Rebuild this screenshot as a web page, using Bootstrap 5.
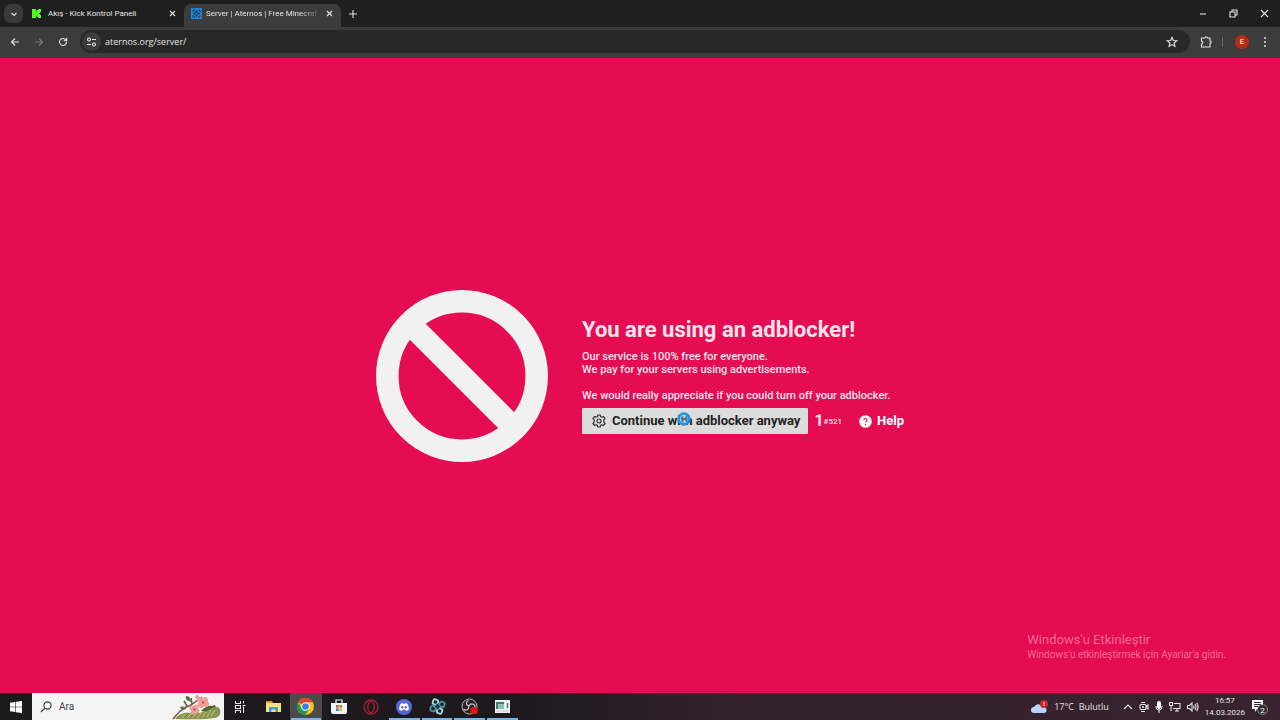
<!DOCTYPE html>
<html lang="tr">
<head>
<meta charset="utf-8">
<meta name="viewport" content="width=device-width, initial-scale=1">
<title>Server | Aternos | Free Minecraft Server</title>
<link href="https://cdn.jsdelivr.net/npm/bootstrap@5.3.0/dist/css/bootstrap.min.css" rel="stylesheet">
<style>
body{font-family:Roboto,"Open Sans",sans-serif;font-size:9px;line-height:12px;background:#e60c53;color:#e4e4e4}
button,input{font:inherit;color:inherit}
button{background:none;border:0;padding:0;display:flex;align-items:center;justify-content:center}
svg{display:block;flex-shrink:0}
.ln{fill:none;stroke:currentColor;stroke-width:1.1}
.strip{height:27px;background:#1f1f1f;padding-left:4px}
.tabmenu{width:19px;height:19px;border-radius:7px;background:#3a3a3a}
.tab{height:23px;gap:4px;padding:0 8px 4px 7px;align-self:flex-end;width:157px}
.tab.open{background:#3c3c3c;border-radius:7px 7px 0 0}
.tab a{color:inherit;text-decoration:none;white-space:nowrap;font-size:8px}
.tab.idle{padding-left:5px;gap:7px}
.fade-end{-webkit-mask-image:linear-gradient(90deg,#000 85%,rgba(0,0,0,.2));mask-image:linear-gradient(90deg,#000 85%,rgba(0,0,0,.2))}
.win{width:31px;height:27px}
.toolbar{height:31px;background:#3c3c3c;padding:0 3px 2px}
.tool{width:24px;height:24px}
.omni{height:23px;border-radius:12px;background:#282828;margin-left:5px;padding:0 12px 0 2px}
.omni input{background:none;border:0;outline:0;padding:0;font-family:"Open Sans",sans-serif;font-size:9px;min-width:0}
.site{width:19px;height:19px;border-radius:50%;background:#3c3c3c}
.rule{width:1px;height:10px;background:#666}
.avatar{width:14px;height:14px;border-radius:50%;background:#b92c14;font-size:8px;color:#fff}
.notice{gap:34px;color:#ffe3ec}
.notice h1{font-size:22px;line-height:26px;font-weight:700;margin:0 0 7px}
.notice p{font-size:11px;line-height:13px;margin:0 0 6px;font-weight:500}
.notice .go{height:26px;background:#dcdcdc;color:#222;font-size:13px;font-weight:700;border-radius:1px;padding:0 8px 0 10px;gap:6px}
.count{font-size:16px;font-weight:700;margin-left:6px}
.count small{font-size:8px;font-weight:500;vertical-align:2px}
.help{color:#fff;font-size:13px;font-weight:700;text-decoration:none;gap:5px;margin-left:17px}
.busy{left:95px;top:4px}
.mark-os{right:54px;bottom:32px;color:#f26a95}
.mark-os div{font-size:13px;line-height:17px}
.mark-os span{font-size:10px;line-height:13px}
.taskbar{height:27px;background:linear-gradient(90deg,#1b1b1c 0,#1e191d 40%,#33222c 58%,#38232e 100%)}
.start{width:32px;height:27px}
.find{width:192px;height:27px;background:#f5f5f5;color:#444;padding-left:8px;gap:7px}
.find input{border:0;background:none;outline:0;padding:0;min-width:0;font-size:10px}
.find input::placeholder{color:#444;opacity:1}
.apps{display:grid;grid-template-columns:repeat(9,1fr);width:295px}
.apps button{height:27px;border-bottom:2px solid transparent;padding-top:2px}
.apps .run{border-image:linear-gradient(90deg,transparent 8%,#76b5e8 8%,#76b5e8 92%,transparent 92%) 2}
.apps .now{background:#4b4b4b}
.tray{gap:6px;padding-right:12px}
.weather{font-family:"Open Sans",sans-serif;font-size:9px;margin-right:8px}
.clock{font-size:8px;line-height:12px;text-align:center}
</style>
</head>
<body class="vh-100 d-flex flex-column overflow-hidden">
<header>
  <div class="strip d-flex align-items-center">
    <button class="tabmenu" aria-label="Sekme ara"><svg class="ln" width="8" height="8" viewBox="0 0 8 8"><path d="M1.500 3 4 5.500 6.500 3"/></svg></button>
    <div class="tab idle d-flex align-items-center ms-1">
      <svg width="9" height="9" viewBox="0 0 9 9"><path fill="#53fc18" d="M0 0h4v2h1V1h1V0h3v3H8v1H7v1h1v1h1v3H6V8H5V7H4v2H0z"/></svg>
      <a href="#" class="flex-grow-1">Akış - Kick Kontrol Paneli</a>
      <button aria-label="Kapat"><svg class="ln" width="7" height="7" viewBox="0 0 7 7"><path d="m1 1 5 5M6 1 1 6"/></svg></button>
    </div>
    <div class="tab open d-flex align-items-center">
      <svg width="11" height="11" viewBox="0 0 11 11"><path fill="#2385cf" d="M0 0h11v11H0z"/><path d="M2 4V2h2m3 0h2v2m0 3v2H7M4 9H2V7m2-3h3v3H4zM2 5.500h2m3 0h2M5.500 2v2m0 3v2" fill="none" stroke="#10395e" stroke-width=".9"/></svg>
      <a href="#" class="fade-end">Server | Aternos | Free Minecraf</a>
      <button class="ms-auto" aria-label="Kapat"><svg class="ln" width="7" height="7" viewBox="0 0 7 7"><path d="m1 1 5 5M6 1 1 6"/></svg></button>
    </div>
    <button class="ms-2" aria-label="Yeni sekme"><svg class="ln" width="8" height="8" viewBox="0 0 8 8"><path d="M4 0v8M0 4h8"/></svg></button>
    <button class="win ms-auto" aria-label="Küçült"><svg class="ln" width="8" height="8" viewBox="0 0 8 8"><path d="M1 4h6"/></svg></button>
    <button class="win" aria-label="Önceki boyut"><svg class="ln" width="9" height="9" viewBox="0 0 9 9"><path d="M1 3h5v5H1zM3 3V1h5v5H6"/></svg></button>
    <button class="win" aria-label="Pencereyi kapat"><svg class="ln" width="9" height="9" viewBox="0 0 9 9"><path d="m1 1 7 7M8 1 1 8"/></svg></button>
  </div>
  <div class="toolbar d-flex align-items-center">
    <button class="tool" aria-label="Geri"><svg class="ln" width="10" height="10" viewBox="0 0 10 10"><path d="M9 5H1.500M5 1.500 1.500 5 5 8.500"/></svg></button>
    <button class="tool" aria-label="İleri"><svg class="ln" width="10" height="10" viewBox="0 0 10 10" color="#777"><path d="M1 5h7.500M5 1.500 8.500 5 5 8.500"/></svg></button>
    <button class="tool" aria-label="Yenile"><svg class="ln" width="10" height="10" viewBox="0 0 10 10"><path d="M8.500 5A3.500 3.500 0 1 1 7.600 2.600L8.500 3.600M8.700.8v3H5.700"/></svg></button>
    <div class="omni d-flex align-items-center flex-grow-1">
      <button class="site" aria-label="Site bilgileri"><svg class="ln" width="11" height="10" viewBox="0 0 11 10"><path d="M6 2.500h4M1 7.500h4"/><circle cx="3" cy="2.500" r="1.500"/><circle cx="8" cy="7.500" r="1.500"/></svg></button>
      <input class="flex-grow-1 ms-1" aria-label="Adres" value="aternos.org/server/">
      <button aria-label="Yer işareti"><svg class="ln" width="12" height="12" viewBox="0 0 12 12"><path d="m6 1.300 1.300 3.200 3.400.3-2.600 2.200.8 3.400L6 8.600l-2.900 1.800.8-3.400L1.300 4.800l3.400-.3z"/></svg></button>
    </div>
    <button class="tool ms-1" aria-label="Uzantılar"><svg class="ln" width="13" height="12" viewBox="0 0 13 12"><path d="M1.500 2H5a1.200 1.200 0 0 1 2.400 0H10v3a1.200 1.200 0 0 1 0 2.400V11H1.500V8a1.300 1.300 0 0 0 0-2.800z"/></svg></button>
    <span class="rule mx-1"></span>
    <button class="avatar ms-2 me-1" aria-label="Profil">E</button>
    <button class="tool" aria-label="Menü"><svg width="4" height="12" viewBox="0 0 4 12" fill="#ddd"><circle cx="2" cy="2" r="1"/><circle cx="2" cy="6" r="1"/><circle cx="2" cy="10" r="1"/></svg></button>
  </div>
</header>

<main class="flex-grow-1 position-relative d-flex align-items-center justify-content-center">
  <section class="notice d-flex align-items-center">
    <svg width="172" height="172" viewBox="0 0 172 172" fill="none" stroke="#f1f1f1" stroke-width="22.500"><circle cx="86" cy="86" r="74.700"/><path d="m36 36 100 100"/></svg>
    <div>
      <h1>You are using an adblocker!</h1>
      <p>Our service is 100% free for everyone.<br>We pay for your servers using advertisements.<br><br>We would really appreciate if you could turn off your adblocker.</p>
      <div class="d-flex align-items-center">
        <button class="go position-relative">
          <svg width="14" height="14" viewBox="0 0 14 14" fill="none" stroke="#333" stroke-width="1.200"><path stroke-linejoin="round" d="M5.800 1h2.400l.4 1.700 1 .5 1.700-.7L13 4.500l-1.200 1.300v1.400l.1 1L13 9.500l-1.700 2-1.700-.7-1 .5L8.200 13H5.800l-.4-1.700-1-.5-1.700.7-1.700-2 1.200-1.300V5.800L1 4.500l1.700-2 1.700.7 1-.5z"/><circle cx="7" cy="7" r="2"/></svg>
          Continue with adblocker anyway
          <svg class="busy position-absolute" width="14" height="14" viewBox="0 0 14 14"><circle cx="7" cy="7" r="5.500" fill="#9ccdec" fill-opacity=".7" stroke="#2093df" stroke-width="2.500"/><path d="M5 4.500v5M9 4.500v5M5 7h4" stroke="#234f79"/></svg>
        </button>
        <span class="count">1<small>#521</small></span>
        <a href="#" class="help d-flex align-items-center"><svg width="13" height="13" viewBox="0 0 13 13"><circle cx="6.500" cy="6.500" r="6.300" fill="#fff"/><path d="M4.900 5.200a1.600 1.600 0 1 1 2.300 1.400c-.5.300-.7.500-.7 1M6.500 8.700v1.200" fill="none" stroke="#e60c53" stroke-width="1.100"/></svg>Help</a>
      </div>
    </div>
  </section>
  <aside class="mark-os position-absolute"><div>Windows'u Etkinleştir</div><span>Windows'u etkinleştirmek için Ayarlar'a gidin.</span></aside>
</main>

<footer class="taskbar d-flex align-items-center">
  <button class="start" aria-label="Başlat"><svg width="12" height="12" viewBox="0 0 12 12" fill="#fff"><path d="M0 1.700 5.400.9v4.800H0zM6 .8 12 0v5.700H6zM0 6.300h5.400v4.800L0 10.300zM6 6.300h6V12l-6-.8z"/></svg></button>
  <div class="find d-flex align-items-center">
    <svg width="12" height="12" viewBox="0 0 12 12" fill="none" stroke="#333" stroke-width="1.100"><circle cx="7.500" cy="4.500" r="3.600"/><path d="M5 7 .8 11.200"/></svg>
    <input class="flex-grow-1" aria-label="Ara" placeholder="Ara">
    <svg width="52" height="26" viewBox="0 0 52 26"><path fill="#45682d" d="M29 17c4-4 8-6 11-5l3-1 2 5-6 3z"/><path fill="#8a9650" d="M3 25c4-5 8-7 15-6 9 1 15-1 20-4 4-2 8-3 9-1 3 4 1 9-4 10-12 2-27 1-40 1z"/><path d="m10 24 3-4m2 4 4-4m1 4 4-4m1 4 4-5m1 5 4-6m1 5 4-7m0 6 4-6" stroke="#c8bf78" stroke-width="1"/><path d="M1 25C6 19 10 14 19 11L30 3M15 12 12 7m8 3-1-6" fill="none" stroke="#765044" stroke-width="1.500"/><path fill="#4e7b42" d="M14 2c4 0 5 3 5 6-4-1-6-3-5-6zM8 13c3-1 5 0 6 2-3 1-5 1-6-2z"/><g fill="#eda09b"><circle cx="20" cy="14" r="2.500"/><circle cx="24" cy="13" r="2.500"/><circle cx="25" cy="17" r="2.500"/><circle cx="21" cy="18" r="2.500"/><circle cx="28" cy="6" r="3"/><circle cx="33" cy="6" r="3"/><circle cx="34" cy="10" r="3"/><circle cx="29" cy="11" r="3"/><circle cx="25" cy="3" r="2"/></g><g fill="#c84f58"><circle cx="22.500" cy="15.500" r="1.200"/><circle cx="31" cy="8.500" r="1.200"/></g></svg>
  </div>
  <nav class="apps">
    <button aria-label="Görev görünümü"><svg class="ln" width="12" height="12" viewBox="0 0 12 12"><path d="M1.500 0v2.500h5V0M1.500 12V9.500h5V12M1.500 4.500h5v3h-5zM9.500 0v2.500m0 3V12M8.500 4.500h3"/></svg></button>
    <button aria-label="Dosya Gezgini"><svg width="15" height="13" viewBox="0 0 15 13"><path fill="#d89b26" d="M0 1h6l1 2h8v8H0z"/><path fill="#ffe17c" d="M0 3h15v9H0z"/><path fill="#4a9bd5" d="M3 7h9v5H9.500V9.500h-4V12H3z"/></svg></button>
    <button class="run now" aria-label="Chrome"><svg width="17" height="17" viewBox="0 0 18 18"><circle cx="9" cy="9" r="9" fill="#fbc116"/><path fill="#dc4437" d="M9 9 1.200 4.500A9 9 0 0 1 16.800 4.500H9z"/><path fill="#249b54" d="M1.200 4.500A9 9 0 0 0 9 18l3.900-6.700H5.100z"/><circle cx="9" cy="9" r="4.500" fill="#fff"/><circle cx="9" cy="9" r="3.500" fill="#3f7de4"/></svg></button>
    <button aria-label="Mağaza"><svg width="16" height="16" viewBox="0 0 16 16"><path d="M5 4V1h6v3" fill="none" stroke="#e8f3fa" stroke-width="1.200"/><path fill="#f3f6f7" d="M0 4h16v9q0 2-2 2H2q-2 0-2-2z"/><path fill="#e24b32" d="M5 6h2.700v2.700H5z"/><path fill="#6da82f" d="M8.300 6H11v2.700H8.300z"/><path fill="#2f8bd3" d="M5 9.300h2.700V12H5z"/><path fill="#eeb126" d="M8.300 9.300H11V12H8.300z"/></svg></button>
    <button aria-label="Opera"><svg width="16" height="16" viewBox="0 0 16 16" fill="none" stroke="#ad1c3b" stroke-width="1.300"><circle cx="8" cy="8" r="7"/><ellipse cx="8" cy="8" rx="3.200" ry="5.700"/></svg></button>
    <button class="run" aria-label="Discord"><svg width="16" height="16" viewBox="0 0 16 16"><circle cx="8" cy="8" r="8" fill="#5865db"/><path fill="#fff" d="M5 4.500 6.500 4l.5.700h2l.5-.7 1.500.5c1.300 1.700 2 3.800 1.800 6L10.500 12l-.8-1.200H6.300L5.500 12l-2.300-1.500c-.2-2.200.5-4.300 1.800-6z"/><circle cx="6.200" cy="8.300" r="1.200" fill="#5865db"/><circle cx="9.800" cy="8.300" r="1.200" fill="#5865db"/></svg></button>
    <button class="run" aria-label="Oyun başlatıcı"><svg width="17" height="17" viewBox="0 0 17 17"><g transform="rotate(20 8.500 8.500)"><g fill="none" stroke-width="1.800"><rect x="2.500" y="2.500" width="5" height="5" rx="1.500" stroke="#a9dce2"/><rect x="9.500" y="2.500" width="5" height="5" rx="1.500" stroke="#4b93a4"/><rect x="9.500" y="9.500" width="5" height="5" rx="1.500" stroke="#a9dce2"/><rect x="2.500" y="9.500" width="5" height="5" rx="1.500" stroke="#4b93a4"/></g></g><path d="m8.500 5 3.500 3.500-3.500 3.500L5 8.500z" fill="#1d3d48" stroke="#59b8ca"/></svg></button>
    <button class="run" aria-label="OBS Studio"><svg width="17" height="17" viewBox="0 0 17 17"><circle cx="8.500" cy="8.500" r="7.500" fill="#242226" stroke="#bbb"/><path d="M8 8C4.500 7 5 3.500 7.500 2.500M8 8c2-3.500 6-2 6 1M8 8c0 4-3.500 5-5.500 3" fill="none" stroke="#c7c7c7" stroke-width="1.200"/><rect x="9.500" y="9" width="7" height="7" rx="2.500" fill="#e51313"/></svg></button>
    <button class="run" aria-label="Uygulama"><svg width="15" height="13" viewBox="0 0 15 13"><path fill="#eef1ef" d="M0 0h15v13H0z"/><path fill="#387f78" d="M1 2h8v7H1z"/><path fill="#8fc0ae" d="M3 4h6v5H3z"/><path d="M12.500 3v5" stroke="#387f78" stroke-width="1.500"/><path d="M1 11h12" stroke="#c4c8c6"/></svg></button>
  </nav>
  <div class="tray d-flex align-items-center ms-auto">
    <svg width="17" height="14" viewBox="0 0 17 14"><path fill="#b9d4f5" d="M3 13a3 3 0 0 1 0-6 5 5 0 0 1 9 0 3 3 0 0 1 1 6z"/><circle cx="13" cy="4" r="4" fill="#c72230"/><path d="M13 2v2.500m0 .5v1" stroke="#fff"/></svg>
    <span class="weather">17°C&nbsp; Bulutlu</span>
    <svg class="ln" width="10" height="7" viewBox="0 0 10 7"><path d="m1 6 4-4 4 4"/></svg>
    <svg class="ln" width="10" height="12" viewBox="0 0 10 12"><rect x="1" y="3.500" width="6" height="5" rx="1"/><circle cx="4" cy="6" r=".5"/><path d="M7 5.500 9 4v4L7 6.500M2 1.500h4M2 10.500h4"/></svg>
    <svg width="8" height="12" viewBox="0 0 8 12"><rect x="2" width="4" height="8" rx="2" fill="#fff"/><path d="M1 5v1a3 3 0 0 0 6 0V5M4 9v3" fill="none" stroke="#fff"/></svg>
    <svg class="ln" width="12" height="10" viewBox="0 0 12 10"><path d="M5 1.500h6v5H4M6 9h4M8 6.500V9M.5.500h3v3h-3zM2 3.500V9"/></svg>
    <svg class="ln" width="12" height="10" viewBox="0 0 12 10"><path d="M.5 3.500h2L5 1v8L2.500 6.500h-2zM6.500 3.500q1 1.500 0 3M8 2q2 3 0 6M9.700.7q2.700 4.300 0 8.600"/></svg>
    <div class="clock">16:57<br>14.03.2026</div>
    <button aria-label="Bildirimler"><svg width="17" height="16" viewBox="0 0 17 16"><path fill="#fff" d="M1 1h11v9H6l-2 3v-3H1z"/><path d="M3 3.500h7M3 5.500h7M3 7.500h4" stroke="#38232e"/><circle cx="11.500" cy="10.500" r="5" fill="#342b30" stroke="#aaa" stroke-width=".7"/><text x="11.500" y="13.500" text-anchor="middle" font-size="8" fill="#fff">2</text></svg></button>
  </div>
</footer>
<script src="https://cdn.jsdelivr.net/npm/bootstrap@5.3.0/dist/js/bootstrap.bundle.min.js"></script>
</body>
</html>
